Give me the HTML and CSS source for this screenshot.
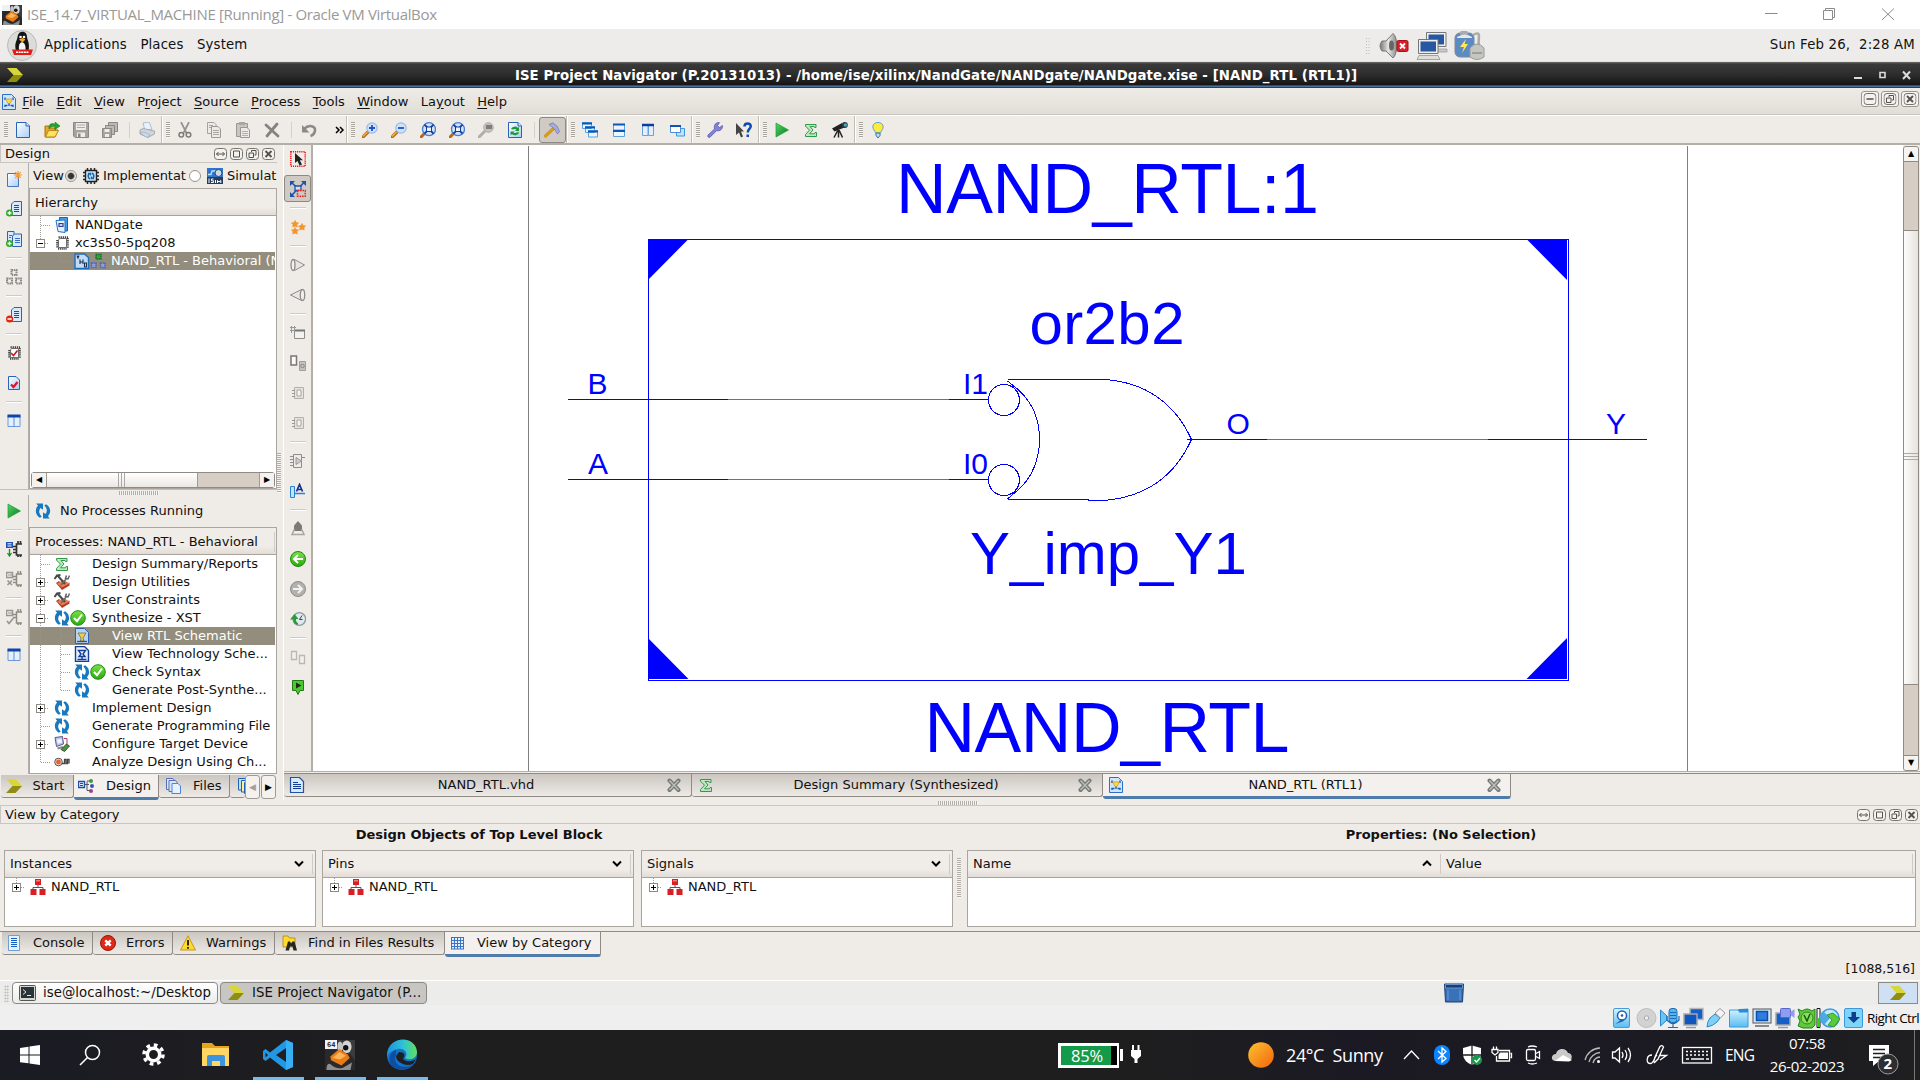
FILE: index.html
```html
<!DOCTYPE html>
<html lang="en">
<head>
<meta charset="utf-8">
<title>ISE_14.7_VIRTUAL_MACHINE [Running] - Oracle VM VirtualBox</title>
<link rel="stylesheet" href="styles.css">
</head>
<body>
<svg class="defs" width="0" height="0" aria-hidden="true">
<defs>
<linearGradient id="gPage" x1="0" y1="0" x2="1" y2="1"><stop offset="0" stop-color="#fff"/><stop offset="1" stop-color="#a9cdf8"/></linearGradient>
<linearGradient id="gGreen" x1="0" y1="0" x2="0" y2="1"><stop offset="0" stop-color="#7be04a"/><stop offset="1" stop-color="#2aa80f"/></linearGradient>
<linearGradient id="gPlay" x1="0" y1="0" x2="1" y2="1"><stop offset="0" stop-color="#55d36a"/><stop offset="1" stop-color="#067a1c"/></linearGradient>
<linearGradient id="gSky" x1="0" y1="0" x2="0" y2="1"><stop offset="0" stop-color="#d6f4ff"/><stop offset="1" stop-color="#58bdf2"/></linearGradient>
<linearGradient id="gSun" x1="0" y1="0" x2="1" y2="1"><stop offset="0" stop-color="#fcc332"/><stop offset="1" stop-color="#f2640c"/></linearGradient>
<linearGradient id="gEdge" x1="0" y1="0" x2="1" y2="0"><stop offset="0" stop-color="#1b8fdc"/><stop offset=".55" stop-color="#2fc3d6"/><stop offset="1" stop-color="#62e05a"/></linearGradient>
<linearGradient id="gMetal" x1="0" y1="0" x2="1" y2="0"><stop offset="0" stop-color="#777"/><stop offset=".5" stop-color="#e6e6e4"/><stop offset="1" stop-color="#8a8a88"/></linearGradient>
</defs>
<symbol id="t-mid" viewBox="0 0 24 18"><path d="M10.5 0V18M11 9.500H20" class="dots"/></symbol>
<symbol id="t-end" viewBox="0 0 24 18"><path d="M10.500 0V9.500H20" class="dots"/></symbol>
<symbol id="t-line" viewBox="0 0 20 18"><path d="M10.500 0V18" class="dots"/></symbol>
<symbol id="t-plus" viewBox="0 0 24 18"><path d="M10.500 0V18M15 9.500H19" class="dots"/><rect x="6.500" y="5.500" width="8" height="8" fill="#fff" stroke="#8e8a84"/><path d="M8 9.500H13M10.500 7V12" stroke="#000"/></symbol>
<symbol id="t-plus1" viewBox="0 0 24 18"><path d="M10.500 0V5M15 9.500H19" class="dots"/><rect x="6.500" y="5.500" width="8" height="8" fill="#fff" stroke="#8e8a84"/><path d="M8 9.500H13M10.500 7V12" stroke="#000"/></symbol>
<symbol id="t-minus" viewBox="0 0 24 18"><path d="M10.500 0V18M15 9.500H19" class="dots"/><rect x="6.500" y="5.500" width="8" height="8" fill="#fff" stroke="#8e8a84"/><path d="M8 9.500H13" stroke="#000"/></symbol>
<symbol id="t-minus1" viewBox="0 0 24 18"><path d="M10.500 0V5M15 9.500H19" class="dots"/><rect x="6.500" y="5.500" width="8" height="8" fill="#fff" stroke="#8e8a84"/><path d="M8 9.500H13" stroke="#000"/></symbol>

<symbol id="chev" viewBox="0 0 16 16"><path d="M0 1H9.500L16 8H6.500Z" fill="#d8d638"/><path d="M6.500 8H16L9.500 15H0Z" fill="#8f8d12"/></symbol>
<symbol id="page" viewBox="0 0 16 16"><path d="M1.500 .500H11L14.500 4V15.500H1.500Z" fill="url(#gPage)" stroke="#2a62b8"/><path d="M11 .500V4H14.500" fill="#dbe9ff" stroke="#2a62b8"/></symbol>
<symbol id="open" viewBox="0 0 16 16"><path d="M1 15V4H5L6 6H11V8L14 8 11 15Z" fill="#e0a92a" stroke="#a87413"/><path d="M1.500 15 4.500 8.500H14.500L11 15Z" fill="#ffe25c" stroke="#b98a1c"/><path d="M5 5C5.500 1.500 8 1 11 2.200V0L16 4 11 7.600V5C8.500 4 7 4.500 5 7Z" fill="#25a32a" stroke="#117514" stroke-width=".5"/></symbol>
<symbol id="save" viewBox="0 0 16 16"><path d="M.500.500H15.500V15.500H2L.500 14Z" fill="#a5a3a0" stroke="#8a8885"/><path d="M3 1H13V8H3Z" fill="#efece8"/><path d="M4 3H12M4 5.500H12" stroke="#aaa"/><path d="M4 10.500H12V15H4Z" fill="#efece8"/><path d="M5 11.500H7.500V15H5Z" fill="#8a8885"/></symbol>
<symbol id="saveall" viewBox="0 0 16 16"><path d="M6.500.500H15.500V9.500H6.500Z" fill="#bcb9b5" stroke="#8a8885"/><path d="M3.500 3.500H12.500V12.500H3.500Z" fill="#bcb9b5" stroke="#8a8885"/><path d="M.500 6.500H9.500V15.500H.500Z" fill="#a5a3a0" stroke="#8a8885"/><path d="M2.500 7H7.500V10H2.500ZM3 12H7V15H3Z" fill="#efece8"/></symbol>
<symbol id="print" viewBox="0 0 16 16"><path d="M4 1 10 0 13 7 6 9Z" fill="#e8f1fc" stroke="#9db4cc" stroke-width=".8"/><path d="M1 8 4 6.500 15.500 9V12L9 15.500 1 12Z" fill="#d2d4d8" stroke="#9a9ca0" stroke-width=".8"/><path d="M1 11 5 10 11 13 8 15.500Z" fill="#c6dcf5" stroke="#8ba3bd" stroke-width=".6"/></symbol>
<symbol id="cut" viewBox="0 0 16 16"><path d="M4 0 9.500 11M12 0 6.500 11" stroke="#94928f" stroke-width="1.700"/><circle cx="4.300" cy="12.700" r="2.300" fill="none" stroke="#7d7b78" stroke-width="1.500"/><circle cx="11.500" cy="12.700" r="2.300" fill="none" stroke="#7d7b78" stroke-width="1.500"/></symbol>
<symbol id="copy" viewBox="0 0 16 16"><path d="M1.500.500H8L10 2.500V11.500H1.500Z" fill="#eceae7" stroke="#a5a29e"/><path d="M5.500 4.500H12L14.500 7V15.500H5.500Z" fill="#eceae7" stroke="#9a9794"/><path d="M7 8.500H13M7 10.500H13M7 12.500H13M3 3.500H7M3 5.500H5" stroke="#aaa7a3"/></symbol>
<symbol id="paste" viewBox="0 0 16 16"><path d="M1.500 1.500H12.500V14.500H1.500Z" fill="#c9c6c2" stroke="#9a9794"/><path d="M4 0H10V3H4Z" fill="#aaa7a3"/><path d="M5.500 5.500H12L14.500 8V15.500H5.500Z" fill="#eceae7" stroke="#9a9794"/><path d="M7 9.500H13M7 11.500H13M7 13.500H13" stroke="#b3b0ac"/></symbol>
<symbol id="del" viewBox="0 0 16 16"><path d="M2 3 14 14M13 2 3 14" stroke="#85837f" stroke-width="2.800" stroke-linecap="round"/></symbol>
<symbol id="undo" viewBox="0 0 16 16"><path d="M3 7C8 2 14.500 4 14 8.500 13.700 11 12 13 9.500 14" fill="none" stroke="#8c8a87" stroke-width="2.600"/><path d="M1 3V10.500H8.500Z" fill="#8c8a87"/></symbol>
<symbol id="lens" viewBox="0 0 16 16"><path d="M1 15 6.500 9.500" stroke="#b56a12" stroke-width="3.200" stroke-linecap="round"/><path d="M1 14.500 5.500 10" stroke="#f2b04c" stroke-width="1.200"/><circle cx="10" cy="6" r="5.200" fill="#cfe2fb" stroke="#9bb9e8" stroke-width="1.200"/></symbol>
<symbol id="zin" viewBox="0 0 16 16"><use href="#lens"/><path d="M10 3V9M7 6H13" stroke="#1b53c0" stroke-width="1.800"/></symbol>
<symbol id="zout" viewBox="0 0 16 16"><use href="#lens"/><path d="M7 6H13" stroke="#1b53c0" stroke-width="1.800"/></symbol>
<symbol id="zfit" viewBox="0 0 16 16"><path d="M1 15 5 11" stroke="#b56a12" stroke-width="3" stroke-linecap="round"/><circle cx="9" cy="7.200" r="6.500" fill="#cfe2fb" stroke="#4a7dd0" stroke-width="1.300"/><path d="M4.500 2.700 13.500 11.700M13.500 2.700 4.500 11.700" stroke="#123f9c" stroke-width="1.900"/><rect x="6.500" y="5" width="5" height="4.500" fill="#e8f2ff" stroke="#123f9c"/></symbol>
<symbol id="zgray" viewBox="0 0 16 16"><path d="M1 15 6.500 9.500" stroke="#b1aeaa" stroke-width="3" stroke-linecap="round"/><circle cx="10.500" cy="5.500" r="4.800" fill="#c4c1bd" stroke="#b0ada9"/><rect x="8" y="3" width="6" height="4" fill="#807e7b"/></symbol>
<symbol id="refresh" viewBox="0 0 16 16"><use href="#page"/><path d="M4 7A4 3.500 0 0 1 11 6L12 4.500V9H8L9.500 7.500A3 2 0 0 0 6 7.500ZM12 10A4 3.500 0 0 1 5 12L3.500 13.500V9.500H7.500L6.500 11A3 2 0 0 0 9.500 10.500Z" fill="#1d9a31"/></symbol>
<symbol id="hammer" viewBox="0 0 16 16"><path d="M1.500 14 9.500 6.500" stroke="#d69a1e" stroke-width="3.200" stroke-linecap="round"/><path d="M5 2.500 9 .800 13 4 15.500 9.500 13.500 12 10.500 7 7.500 4.500Z" fill="#a7abdf" stroke="#6d70ae" stroke-width=".7"/></symbol>
<symbol id="wcas" viewBox="0 0 16 16"><path d="M.500.500H9.500V6.500H.500ZM3.500 4.500H12.500V10.500H3.500ZM6.500 8.500H15.500V15H6.500Z" fill="#eaf5ff" stroke="#5aa2dc"/><path d="M0 1.500H10M3 5.500H13M6 9.500H16" stroke="#0d56b5" stroke-width="2"/></symbol>
<symbol id="whor" viewBox="0 0 16 16"><path d="M2.500 2.500H13.500V8H2.500ZM2.500 9.500H13.500V14.500H2.500Z" fill="#eaf5ff" stroke="#5aa2dc"/><path d="M2 2.500H14M2 9H14" stroke="#0d56b5" stroke-width="2"/></symbol>
<symbol id="wver" viewBox="0 0 16 16"><path d="M2.500 2.500H8V13.500H2.500ZM8.500 2.500H13.500V13.500H8.500Z" fill="#e3efff" stroke="#6aa0dc"/><path d="M2 3H14" stroke="#0a3f9c" stroke-width="2.500"/></symbol>
<symbol id="wflt" viewBox="0 0 16 16"><path d="M7.500 6.500H15.500V14H7.500Z" fill="#bfe2fa" stroke="#3d9ae0"/><path d="M1.500 3.500H11.500V10.500H1.500Z" fill="#fff" stroke="#4a8ed6"/><path d="M1 4H12" stroke="#0d56b5" stroke-width="2"/></symbol>
<symbol id="wrench" viewBox="0 0 16 16"><path d="M1 13 7.500 7C6.500 3 9 0 12.500.700L10.500 3.500 12.500 5.500 15.500 3.500C16 7 13 9.500 9.500 8.700L3 15.300C1.500 16 .200 14.500 1 13Z" fill="#8183d8" stroke="#5052a2" stroke-width=".7"/></symbol>
<symbol id="whats" viewBox="0 0 16 16"><path d="M0 1V13L3 10.500 5 15.500 7 14.500 5 9.500H8Z" fill="#444"/><path d="M8.500 4.500C8.500.500 15 .500 14.700 4.500 14.500 7 11.800 7 11.800 10.500" fill="none" stroke="#0b4cae" stroke-width="2.500"/><path d="M10.500 12.500H13V15H10.500Z" fill="#0b4cae"/></symbol>
<symbol id="play" viewBox="0 0 16 16"><path d="M2 1V15L14.500 8Z" fill="url(#gPlay)" stroke="#1fa233" stroke-width=".7"/></symbol>
<symbol id="sigma" viewBox="0 0 16 16"><path d="M2.500 2.500H13V5.500H11.500L11 4.500H7L10 8 6.500 11.800H11.500L12 10.500H13.500V14.500H2.500V12.500L6.500 8.200 2.500 4.200Z" fill="#bfe8c2" stroke="#2f9a47"/></symbol>
<symbol id="scope" viewBox="0 0 16 16"><path d="M0 6.500 10 1 12.500 5.500 2.500 9.500Z" fill="#222"/><circle cx="12.800" cy="3" r="3" fill="#333"/><circle cx="13.400" cy="3" r="1.800" fill="#38a8cf"/><path d="M6 8 2 15.500M6.500 8V15.500M7 8 10.500 15.500" stroke="#222" stroke-width="1.500"/></symbol>
<symbol id="bulb" viewBox="0 0 16 16"><path d="M5.500 11C5 8.500 2.800 7.500 2.800 4.800 2.800-1 13.200-1 13.200 4.800 13.200 7.500 11 8.500 10.500 11Z" fill="#ffe93c" stroke="#58a9d8"/><path d="M6 11H10V13.500L8 16 6 13.500Z" fill="#bcd9ee" stroke="#1e6ca4" stroke-width=".9"/></symbol>

<symbol id="newsrc" viewBox="0 0 16 16"><path d="M1.500 2.500H12.500V15.500H1.500Z" fill="url(#gPage)" stroke="#4a74b8"/><path d="M12 0V8M8 4H16M9.200 1.200 14.800 6.800M14.800 1.200 9.200 6.800" stroke="#f29a2b" stroke-width="1.200"/></symbol>
<symbol id="doc" viewBox="0 0 16 16"><path d="M8 .500H15.500V14.500H5.500V3Z" fill="#d8e8fd" stroke="#2a62b8"/><path d="M8 4.500H13M8 6.500H13M8 8.500H13M8 10.500H13" stroke="#1d4fa8"/></symbol>
<symbol id="adddoc" viewBox="0 0 16 16"><use href="#doc"/><circle cx="3.500" cy="12" r="3.500" fill="#2fa52a"/><path d="M3.500 10V14M1.500 12H5.500" stroke="#fff" stroke-width="1.300"/></symbol>
<symbol id="addcopy" viewBox="0 0 16 16"><path d="M1.500.500H8V14H1.500Z" fill="#d8e8fd" stroke="#2a62b8"/><path d="M8.500 3H15.500V15.500H6.500V5Z" fill="#d8e8fd" stroke="#2a62b8"/><path d="M9 7.500H14M9 9.500H14M9 11.500H14M3 4.500H6M3 6.500H5" stroke="#3b6cc0"/><circle cx="3.500" cy="12.500" r="3.500" fill="#2fa52a"/><path d="M3.500 10.500V14.500M1.500 12.500H5.500" stroke="#fff" stroke-width="1.300"/></symbol>
<symbol id="rmdoc" viewBox="0 0 16 16"><use href="#doc"/><circle cx="3.600" cy="12" r="3.600" fill="#dc2a12"/><path d="M1.500 12H5.700" stroke="#fff" stroke-width="1.500"/></symbol>
<symbol id="tri" viewBox="0 0 16 16"><path d="M5.500 1H10.500V6H5.500ZM1 9.500H6V14.500H1ZM10 9.500H15V14.500H10Z" fill="none" stroke="#8b8986" stroke-width="2" stroke-dasharray="1.500 .700"/></symbol>
<symbol id="chip" viewBox="0 0 16 16"><path d="M5.500 3.500H12.500V12.500H4.500V5Z" fill="#fff" stroke="#777"/><path d="M4.500 2.200H14M4 13.800H13M3.200 5V13.500M13.800 3V13.500" stroke="#444" stroke-width="2" stroke-dasharray="1.300 .800"/></symbol>
<symbol id="chipchk" viewBox="0 0 16 16"><use href="#chip"/><path d="M5 8 7.500 10.500 11.500 5.500" fill="none" stroke="#d01522" stroke-width="1.600"/></symbol>
<symbol id="pgchk" viewBox="0 0 16 16"><path d="M2.500 1.500H10L13.500 5V14.500H2.500Z" fill="url(#gPage)" stroke="#2a62b8"/><path d="M5 9.500 7.500 12 11.500 7" fill="none" stroke="#dd1727" stroke-width="2.300"/></symbol>
<symbol id="cols" viewBox="0 0 16 16"><path d="M2 2.500H14V13.500H2Z" fill="#e4f0ff" stroke="#6d9ad6"/><path d="M8 4V14" stroke="#5d8fd4"/><path d="M1.500 3H14.500" stroke="#0f44a8" stroke-width="3"/></symbol>

<symbol id="pchip" viewBox="0 0 16 16"><path d="M0 1H7V7H0Z" fill="#1f52b4"/><path d="M1.500 2.800H5.500M1.500 5H5.500" stroke="#fff"/><path d="M3.500 8V14M1.500 12 3.500 15 5.500 12" stroke="#16902a" fill="none" stroke-width="1.300"/><path d="M16 3H10.500V14H16M7 5.500H10M7 8.500H10M7 11.500H10M12 0V3M14.500 0V3M12 14V16M14.500 14V16" stroke="#333" stroke-width="1.700" fill="none"/></symbol>
<symbol id="pgray" viewBox="0 0 16 16"><path d="M.500 1.500H6.500V6.500H.500Z" fill="none" stroke="#999692" stroke-width="1.500"/><path d="M2 4H6" stroke="#999692"/><path d="M1.500 9.500 6 14M6 9.500 1.500 14" stroke="#999692" stroke-width="1.700"/><path d="M16 3H10.500V14H16M7 5.500H10M7 8.500H10M7 11.500H10M12 0V3M14.500 0V3M12 14V16M14.500 14V16" stroke="#8f8c88" stroke-width="1.500" fill="none"/></symbol>
<symbol id="pgray2" viewBox="0 0 16 16"><path d="M.500 1.500H6.500V6.500H.500Z" fill="none" stroke="#999692" stroke-width="1.500"/><path d="M2 4H6" stroke="#999692"/><path d="M1 12 3 14.500 7.500 9" fill="none" stroke="#999692" stroke-width="1.700"/><path d="M16 3H10.500V14H16M7 5.500H10M7 8.500H10M12 0V3M14.500 0V3M12 14V16M14.500 14V16" stroke="#8f8c88" stroke-width="1.500" fill="none"/></symbol>

<symbol id="select" viewBox="0 0 16 16"><path d="M.800.800H15.200V15.200H.800Z" fill="none" stroke="#ee1c1c" stroke-width="1.500" stroke-dasharray="1.200 .900"/><path d="M5 2V12L7.500 10 9.500 14.500 12 13.500 9.800 9.300H13Z" fill="#222"/></symbol>
<symbol id="fitsel" viewBox="0 0 16 16"><path d="M1.500 1.500 8 7.500M14 1.500 2 14" stroke="#1c53ad" stroke-width="1.600"/><path d="M0 0H5L0 5ZM16 0V5L11 0ZM0 16V11L5 16Z" fill="#1c53ad"/><path d="M5 5H11V9.500H5Z" fill="#d6dff0" stroke="#1c53ad" stroke-width="1.300"/><path d="M7.500 9.500H15.200V15.200H7.500Z" fill="#cfcac4" stroke="#ee1c1c" stroke-width="1.500" stroke-dasharray="1.500 1"/></symbol>
<symbol id="stars" viewBox="0 0 16 16"><path d="M5 1.500 6 3.700 8.500 4 6.800 5.500 7.200 8 5 6.900 2.800 8 3.200 5.500 1.500 4 4 3.700ZM5 8.500 6 10.700 8.500 11 6.800 12.500 7.200 15 5 13.900 2.800 15 3.200 12.500 1.500 11 4 10.700ZM12 4.500 13 6.700 15.500 7 13.800 8.700 14.200 11 12 9.900 9.800 11 10.200 8.700 8.500 7 11 6.700Z" fill="#f5932a" stroke="#f5932a" stroke-width=".8"/></symbol>
<symbol id="coneR" viewBox="0 0 16 16"><path d="M4.500 2.500 14.500 8 4.500 13.500Z" fill="#e8e6e3" stroke="#8f8d8a"/><ellipse cx="3" cy="8" rx="2" ry="5.500" fill="#f2f0ed" stroke="#8f8d8a" stroke-width="1.300"/></symbol>
<symbol id="coneL" viewBox="0 0 16 16"><path d="M11.500 2.500 .500 8 11.500 13.500Z" fill="#e8e6e3" stroke="#8f8d8a"/><ellipse cx="12.500" cy="8" rx="2.200" ry="5.500" fill="#f2f0ed" stroke="#8f8d8a" stroke-width="1.300"/></symbol>
<symbol id="nwin" viewBox="0 0 16 16"><path d="M4.500 5.500H14.500V13.500H4.500Z" fill="#f2f2f0" stroke="#8e8c89"/><path d="M5 5.500H15" stroke="#777" stroke-width="2"/><path d="M0 2.500H6M0 5.500H5M1.500 1V8M4.500 1V7" stroke="#9a9895"/></symbol>
<symbol id="boxes" viewBox="0 0 16 16"><path d="M1 1H6.500V10H1Z" fill="#fafafa" stroke="#777" stroke-width="1.500"/><path d="M9.500 6.500H15.500V15.500H9.500Z" fill="#c6c4c1" stroke="#a09e9b"/><circle cx="12.500" cy="11" r="1.800" fill="none" stroke="#888"/></symbol>
<symbol id="gchip" viewBox="0 0 16 16"><path d="M4.500 2.500H13.500V13.500H4.500Z" fill="#e6e3df" stroke="#b3b0ac"/><path d="M7 5H11V11H7Z" fill="#f5f3f0" stroke="#aaa7a3"/><path d="M2 5.500H5M2 8.500H5M2 11.500H5" stroke="#9a9894"/></symbol>
<symbol id="amp" viewBox="0 0 16 16"><path d="M3.500 1.500H11.500V14.500H3.500Z" fill="#eeecea" stroke="#8f8d8a"/><path d="M6 4.500 11.500 8 6 11.500Z" fill="#cfcdca" stroke="#9a9895"/><path d="M0 3.500H3M0 6.500H3M0 9.500H3M0 12.500H3M12 4.500H15" stroke="#8f8d8a"/></symbol>
<symbol id="label" viewBox="0 0 16 16"><path d="M.500 3.500H4.500V14.500H.500Z" fill="#bfe4fb" stroke="#2a83d0"/><path d="M4 10.500H15" stroke="#2a83d0" stroke-width="1.500"/><path d="M6.500 8.500 9.500 1.500 12.500 8.500M7.500 6.500H11.500" fill="none" stroke="#1b2f8c" stroke-width="1.700"/></symbol>
<symbol id="push" viewBox="0 0 16 16"><path d="M8 0 12 4.500V10H4V4.500Z" fill="#7c7a77"/><path d="M4.500 8 2 13.500H14L11.500 8" fill="none" stroke="#a8a6a3" stroke-width="1.500"/></symbol>
<symbol id="back" viewBox="0 0 16 16"><circle cx="8" cy="8" r="7.500" fill="url(#gGreen)" stroke="#1c8a0c"/><path d="M8 4 4 8 8 12M4 8H13" fill="none" stroke="#fff" stroke-width="2"/></symbol>
<symbol id="fwd" viewBox="0 0 16 16"><circle cx="8" cy="8" r="7.500" fill="#b3b1ae" stroke="#8e8c89"/><path d="M8 4 12 8 8 12M12 8H3" fill="none" stroke="#f2f2f2" stroke-width="2"/></symbol>
<symbol id="hist" viewBox="0 0 16 16"><circle cx="9.300" cy="8" r="6.300" fill="#dfe9ee" stroke="#8f989e" stroke-width="1.300"/><path d="M9.500 8.500 12 4.500M9.500 8.500H12.500" stroke="#345"/><path d="M8 14C4 13 3 11 3.500 8.500H0L4.500 3 8.500 8H6C5.800 10 6.500 11.500 8 12Z" fill="#2c9a3c"/></symbol>
<symbol id="pair" viewBox="0 0 16 16"><path d="M1.500 2.500H6.500V10.500H1.500ZM9.500 6.500H14.500V14.500H9.500Z" fill="#f1efed" stroke="#bbb8b4" stroke-width="1.300"/></symbol>
<symbol id="tag" viewBox="0 0 16 16"><path d="M2.500 1.500H13.500V11.500H10L8 15.500 6 11.500H2.500Z" fill="#4cc832" stroke="#24781a"/><path d="M6 3.500V9.500L11.500 6.500Z" fill="#1b2a16"/></symbol>

<symbol id="cyc" viewBox="1.500 1 13 14" preserveAspectRatio="none"><path d="M5.500 14C1.500 11.500 1.300 6 4 3.500L2.500 1.500H8V7L6 5.300C4.300 7.500 4.500 10.500 7 12.800ZM10.500 2C14.500 4.500 14.700 10 12 12.500L13.500 14.500H8V9L10 10.700C11.700 8.500 11.500 5.500 9 3.200Z" fill="#1878c0"/></symbol>
<symbol id="okc" viewBox="0 0 16 16"><circle cx="8" cy="8" r="7.300" fill="url(#gGreen)" stroke="#1f8d10"/><path d="M4 8 7 11.200 12 4.500" fill="none" stroke="#fff" stroke-width="2"/></symbol>
<symbol id="tools" viewBox="0 0 16 16"><path d="M2 9 8 16 15.500 11.500V8.500L9 11 5 7Z" fill="#b53c1b"/><path d="M3 9.500 8 13.500 15.500 9.500 10 6Z" fill="#ea7a50"/><path d="M.500 5 3 1.500 6.500 1M4 2 11 10" stroke="#4a4a4a" stroke-width="2" fill="none"/><path d="M15.500 1.500 14 5 11.500 4.500 12.500 1.500M12.500 4.500 7 11" stroke="#666" stroke-width="1.500" fill="none"/></symbol>
<symbol id="rtl" viewBox="0 0 16 16"><path d="M1.500.500H10.500L14.500 4.500V15.500H1.500Z" fill="#b8d3f2" stroke="#2e5fa8"/><path d="M4 5H12L9 10 10 13H6.500L7 10Z" fill="#e8cf58" stroke="#7a6f30" stroke-width=".8"/><path d="M3 13.500H13" stroke="#24549c" stroke-width="1.300"/></symbol>
<symbol id="tech" viewBox="0 0 16 16"><path d="M1.500.500H10.500L14.500 4.500V15.500H1.500Z" fill="#e6effc" stroke="#173f98" stroke-width="1.400"/><path d="M4.500 4.500H11.500L9 8 11 10.500H5L7 8ZM8 10V13M3.500 13.500H12.500" fill="none" stroke="#173f98" stroke-width="1.400"/></symbol>
<symbol id="proj" viewBox="0 0 16 16"><path d="M5.500.500H13.500V14H5.500Z" fill="#4b9ce4" stroke="#1c5fae"/><path d="M2 3.500 11 3V15.500L4 14.500Z" fill="#e2f0fe" stroke="#1c73c8"/><path d="M5 6.500H9V9.500H5Z" fill="#c9d4f4" stroke="#2b3f96" stroke-width="1.200"/></symbol>
<symbol id="vhd" viewBox="0 0 16 16"><path d="M1 1H10.500L14.500 4.500V15.500H1Z" fill="#c3dcf5" stroke="#1f6dbd" stroke-width="1.400"/><path d="M3 2.500 4 5 5 2.500M6 6.500V11M9 6.500V11M6 9H9M10.500 10V14H12.500V10Z" fill="none" stroke="#1c2d50" stroke-width="1.100"/></symbol>
<symbol id="mods" viewBox="0 0 16 16"><path d="M6 1.500H11V6H6Z" fill="#2fa53a" stroke="#19702a" stroke-width="1.500" stroke-dasharray="1.500 .600"/><path d="M1.500 10H6V14.500H1.500ZM10.500 10H15V14.500H10.500Z" fill="#8fa0e0" stroke="#5364b4" stroke-width="1.600" stroke-dasharray="1.500 .600"/></symbol>
<symbol id="conf" viewBox="0 0 16 16"><path d="M1 1.500 8.500.500 9.500 8 2.500 10.500Z" fill="#b9c4ea" stroke="#555b88"/><path d="M3 3.500 7.500 3 8 6.500 3.800 7.800Z" fill="#f4f6ff"/><path d="M3.500 12.500 9 11" stroke="#888" stroke-width="2.200"/><path d="M10 2.500H13V8" fill="none" stroke="#b0386a"/><path d="M7 13.500 12.500 8 15.500 10 10.500 15.500Z" fill="#4a9440" stroke="#223c20" stroke-width=".8"/></symbol>
<symbol id="anlz" viewBox="0 0 16 16"><circle cx="4.500" cy="8" r="3.800" fill="#f4dccb" stroke="#555"/><circle cx="4.500" cy="8" r="2.400" fill="#e2633a"/><path d="M8 9.500H10.500V5.500H12V9.500H13.500V5.500H15V9.500" fill="none" stroke="#444" stroke-width="1.300"/></symbol>
<symbol id="cycchip" viewBox="0 0 16 16"><path d="M2.500 2.500H13.500V13.500H2.500Z" fill="#cfe4f6" stroke="#222" stroke-width="1.400"/><path d="M4.500 0V2M8 0V2M11.500 0V2M4.500 14V16M8 14V16M11.500 14V16M0 4.500H2M0 8H2M0 11.500H2M14 4.500H16M14 8H16M14 11.500H16" stroke="#222" stroke-width="1.500"/><path d="M7 11C4.500 9.500 5 7 6 5.500M9 5C11.500 6.500 11 9 10 10.500M5 5.500H7.500V7.500M11 10.500H8.500V8.500" fill="none" stroke="#1267ad" stroke-width="1.500"/></symbol>
<symbol id="isim" viewBox="0 0 16 16"><path d="M0 0H16V9H0Z" fill="#2f75cb"/><path d="M1 6.500H4L5 3H9" stroke="#bfe0ff" fill="none" stroke-width="1.300"/><circle cx="11.500" cy="5" r="3.500" fill="#ccd8e6" stroke="#384860"/><path d="M0 9H16V16H0Z" fill="#273d60"/><path d="M2 10.500V15M4 14.500H6.500V12.800H4.500V11H6.500M8.500 12V15M10.500 15V12.500L12 14 13.800 12.500V15" stroke="#fff" fill="none"/></symbol>
<symbol id="dsn" viewBox="0 0 16 16"><path d="M.500 3.500H6.500V9.500H.500Z" fill="#dfeafd" stroke="#1c4faa" stroke-width="1.300"/><path d="M2 5.500H5M2 7.500H5" stroke="#1c4faa"/><path d="M7 6.500H11M9 3.500V12.500M9 3H12M9 12.500H12" stroke="#555" fill="none"/><circle cx="13" cy="3" r="2" fill="#3d9a3d"/><circle cx="14" cy="8" r="2" fill="#3b50b8"/><circle cx="13" cy="13" r="2" fill="#9c3b9a"/></symbol>
<symbol id="files" viewBox="0 0 16 16"><path d="M.500.500H7L9 3V11.500H.500Z" fill="#dbe4f8" stroke="#5571b8"/><path d="M3 2.500H9.500L11.500 5V13.500H3Z" fill="#dbe4f8" stroke="#5571b8"/><path d="M6 5.500H12L14.500 8V15.500H6Z" fill="#e6f0ff" stroke="#4a86d8"/></symbol>
<symbol id="libs" viewBox="0 0 16 16"><path d="M1.500.500H9V12H1.500Z" fill="#bfe0fb" stroke="#1b62b8"/><path d="M4.500 2.500H12V14H4.500Z" fill="#fff38a" stroke="#1b62b8"/><path d="M7.500 4.500H15V15.500H7.500Z" fill="#ffef5a" stroke="#1b62b8"/></symbol>
<symbol id="txt" viewBox="0 0 16 16"><path d="M1.500.500H10.500L14.500 4.500V15.500H1.500Z" fill="#d9e8fd" stroke="#24529f" stroke-width="1.200"/><path d="M4 5.500H9M4 7.500H12M4 9.500H12M4 11.500H12" stroke="#123f93" stroke-width="1.200"/></symbol>
<symbol id="sch" viewBox="0 0 16 16"><path d="M1.500.500H10.500L14.500 4.500V15.500H1.500Z" fill="#cfe4fd" stroke="#2b6fc8"/><path d="M4 3.500V6M12 3.500V6M4 13V11.500H6.500M12 13V11.500H9.500M8 9V12" fill="none" stroke="#1c5cc0" stroke-width="1.400"/><path d="M4.500 5H11.500L9 9.500H7Z" fill="#ffd93c" stroke="#b08a14" stroke-width=".6"/></symbol>
<symbol id="closex" viewBox="0 0 14 14"><path d="M2.500 2.500 11.500 12M11.500 2.500 2.500 12" stroke="#777b78" stroke-width="4" stroke-linecap="round"/><path d="M2.500 2.500 11.500 12M11.500 2.500 2.500 12" stroke="#b9bbb7" stroke-width="1.600"/></symbol>
<symbol id="hier" viewBox="0 0 16 16"><path d="M8 6V9M3 11V8.500H13V11" fill="none" stroke="#555"/><path d="M5 0H11V6H5ZM.500 10H6.500V16H.500ZM9.500 10H15.500V16H9.500Z" fill="#d81f26"/><path d="M6 1H10V2.500H6Z" fill="#f17a7a"/></symbol>
<symbol id="cons" viewBox="0 0 16 16"><path d="M2.500.500H13.500V15.500H2.500Z" fill="#e8f2fe" stroke="#6b9fdc"/><path d="M5 3.500H11M5 5.500H11M5 7.500H11M5 9.500H11M5 11.500H11" stroke="#1560c0" stroke-width="1.200"/></symbol>
<symbol id="err" viewBox="0 0 16 16"><circle cx="8" cy="8" r="7.500" fill="#dc2a17" stroke="#9a1408"/><path d="M5.300 5.300 10.700 10.700M10.700 5.300 5.300 10.700" stroke="#fff" stroke-width="2.400"/></symbol>
<symbol id="warn" viewBox="0 0 16 16"><path d="M8 .800 15.500 15H.500Z" fill="#ffd92e" stroke="#c59b12"/><path d="M8 5V10.500M8 12V13.800" stroke="#222" stroke-width="1.900"/></symbol>
<symbol id="find" viewBox="0 0 16 16"><path d="M1 1H6L7.500 3H13V12H1Z" fill="#ffd92e" stroke="#a98416" stroke-width=".8"/><path d="M3.500 15.500 6 6.500H8L9 8.500 10.500 6.500H12.500L15 15.500H11.500L10.500 11.500H8L7 15.500Z" fill="#252525"/></symbol>
<symbol id="grid" viewBox="0 0 16 16"><path d="M2 2H14V14H2Z" fill="#e4efff"/><path d="M1.500 2V14M4.500 2V14M7.500 2V14M10.500 2V14M13.500 2V14M1 2.500H14M1 5.500H14M1 8.500H14M1 11.500H14M1 14H14" stroke="#3b74c4"/></symbol>
<symbol id="ddot" viewBox="0 0 13 12"><rect x=".500" y=".500" width="12" height="11" rx="3" fill="#f4f2ef" stroke="#77736d"/></symbol>
<symbol id="d-arr" viewBox="0 0 13 12"><use href="#ddot"/><path d="M2.500 6H10.500M4.500 4 2.500 6 4.500 8M8.500 4 10.500 6 8.500 8" fill="none" stroke="#55514c"/></symbol>
<symbol id="d-max" viewBox="0 0 13 12"><use href="#ddot"/><path d="M3.500 3H9.500V9H3.500Z" fill="none" stroke="#55514c"/></symbol>
<symbol id="d-flt" viewBox="0 0 13 12"><use href="#ddot"/><path d="M5.500 4V2.500H10V7H8.500M3 5H7.500V9.500H3Z" fill="none" stroke="#55514c"/></symbol>
<symbol id="d-cls" viewBox="0 0 13 12"><use href="#ddot"/><path d="M3.500 3 9.500 9M9.500 3 3.500 9" stroke="#55514c" stroke-width="1.900"/></symbol>
<symbol id="d-min" viewBox="0 0 13 12"><use href="#ddot"/><path d="M3 6H10" stroke="#55514c" stroke-width="1.600"/></symbol>
<symbol id="tux" viewBox="0 0 20 20"><rect width="20" height="20" fill="#29292b"/><path d="M8 0H20V14Q18 10 16 9L9 6Z" fill="#3b3b3d"/><ellipse cx="14.500" cy="4.500" rx="3.200" ry="4.200" fill="#d4d4d4"/><ellipse cx="10" cy="4.500" rx="1.800" ry="3.500" fill="#c4c4c4"/><circle cx="13.800" cy="5.200" r="1.800" fill="#111"/><path d="M3.500 11 9.500 6 15 9.500 16.500 12 11 17 4 13.500Z" fill="#e87c17"/><path d="M5 12 9.500 8 14 10.500 10 13Z" fill="#ffb458"/><path d="M1 20Q1 15 3.500 16 8 20 12 18.500L18 15 17 20Z" fill="#8e8e8e"/><rect width="8" height="6" fill="#f1f1f1"/></symbol>
</svg>

<div class="host-title">
  <svg class="ht-icon" width="20" height="20"><use href="#tux"/></svg>
  <span class="ht-text">ISE_14.7_VIRTUAL_MACHINE [Running] - Oracle VM VirtualBox</span>
  <svg class="ht-btns" width="136" height="29" fill="none" stroke="#8b8b8b"><path d="M5 13.500H17.500M63.500 10.500H72.500V19.500H63.500ZM65.500 10V8.500H74.500V17.500H73M122 8.500 134 20M134 8.500 122 20"/></svg>
</div>

<div class="gnome-top">
  <svg class="oracle" width="30" height="31" viewBox="0 0 30 31"><ellipse cx="15" cy="15.500" rx="14.500" ry="15" fill="#dcdcdb" stroke="#b9b9b9"/><path d="M9 21C7 13 10 11 10.500 7 11 0 20 0 20 7 20.500 11 23 13 21.500 21Z" fill="#141414"/><path d="M12 20Q11 13 15 12 19 13 18.500 20Z" fill="#f2f2f2"/><path d="M12 9.500 15.500 8 18.500 9.500 15.500 12.500Z" fill="#f2a81d"/><circle cx="13.500" cy="7" r="1.300" fill="#fff"/><circle cx="17" cy="7" r="1.300" fill="#fff"/><path d="M5 19.500H26L24 25H7Z" fill="#dc2017"/><path d="M9 22.200H22" stroke="#fff" stroke-width="1.500" stroke-dasharray="2 .600"/></svg>
  <span class="gm">Applications</span><span class="gm">Places</span><span class="gm">System</span>
  <svg class="gtray" width="126" height="33" viewBox="0 0 126 33">
    <path d="M1.500 9V25M4 9V25" stroke="#bbb" stroke-dasharray="1 2"/>
    <path d="M17 12H21L28 4.500C33 8 33 25 28 29L21 22H17Q13 17 17 12Z" fill="url(#gMetal)" stroke="#777"/><ellipse cx="26.500" cy="16.500" rx="2.500" ry="5" fill="#666"/><rect x="32" y="11.500" width="11" height="11" rx="1.500" fill="#d9202a" stroke="#a31017"/><path d="M35 14.500 40 19.500M40 14.500 35 19.500" stroke="#fff" stroke-width="1.800"/>
    <path d="M61.500 3.500H81V17.500H61.500Z" fill="#f0f0ee" stroke="#777"/><path d="M63.500 5.500H79V15.500H63.500Z" fill="#2757a0"/><path d="M68 20H82V23H68Z" fill="#ccc" stroke="#888" stroke-width=".6"/>
    <path d="M53.500 10.500H73V24.500H53.500Z" fill="#f0f0ee" stroke="#777"/><path d="M55.500 12.500H71V22.500H55.500Z" fill="#2757a0"/><path d="M54 26.500H73L75 30.500H52Z" fill="#deded8" stroke="#888" stroke-width=".7"/>
    <rect x="90" y="4" width="19" height="24" rx="5" fill="#5c8ac2" stroke="#7d8a96"/><rect x="95" y="2" width="8" height="4" rx="1.500" fill="#aaa"/><path d="M92 9H107V8Q100 3 92 8Z" fill="#e4e8ec"/><path d="M101 10 95 18H99L97 24 103 15H99.500Z" fill="#ffe95a"/><path d="M108 6C118 0 112 12 114 16" fill="none" stroke="#aaa" stroke-width="2.500"/><path d="M105 28V19Q112 11 119 19V28Q112 33 105 28Z" fill="#c6c6c0" stroke="#999"/><path d="M107 24H117" stroke="#777"/>
  </svg>
  <span class="gclock">Sun Feb 26,&nbsp; 2:28 AM</span>
</div>

<div class="win-title">
  <svg class="wt-icon" width="16" height="16"><use href="#chev"/></svg>
  <span class="wt-text">ISE Project Navigator (P.20131013) - /home/ise/xilinx/NandGate/NANDgate/NANDgate.xise - [NAND_RTL (RTL1)]</span>
  <svg class="wt-btns" width="60" height="16" fill="none" stroke="#dcdcd8"><path d="M1 11H9" stroke-width="2"/><path d="M27 5.500H32V10.500H27Z" stroke-width="1.600"/><path d="M50 4.500 57 12M57 4.500 50 12" stroke-width="2"/></svg>
</div>

<div class="menubar">
  <svg class="mb-icon" width="16" height="18"><use href="#sch"/></svg>
  <span><u>F</u>ile</span><span><u>E</u>dit</span><span><u>V</u>iew</span><span>P<u>r</u>oject</span><span><u>S</u>ource</span><span><u>P</u>rocess</span><span><u>T</u>ools</span><span><u>W</u>indow</span><span>La<u>y</u>out</span><span><u>H</u>elp</span>
  <div class="mdi"><svg width="18" height="16"><use href="#d-min"/></svg><svg width="18" height="16"><use href="#d-flt"/></svg><svg width="18" height="16"><use href="#d-cls"/></svg></div>
</div>

<div class="toolbar">
  <div class="tg"><i class="grip"></i><b><svg><use href="#page"/></svg></b><b><svg><use href="#open"/></svg></b><b><svg><use href="#save"/></svg></b><b><svg><use href="#saveall"/></svg></b><i class="vs"></i><b><svg><use href="#print"/></svg></b></div>
  <div class="tg"><i class="grip"></i><b><svg><use href="#cut"/></svg></b><b><svg><use href="#copy"/></svg></b><b><svg><use href="#paste"/></svg></b><b><svg><use href="#del"/></svg></b><i class="vs"></i><b><svg><use href="#undo"/></svg></b><em><svg width="10" height="8" viewBox="0 0 10 8"><path d="M1 1 4 4 1 7M5 1 8 4 5 7" fill="none" stroke="#000" stroke-width="1.500"/></svg></em></div>
  <div class="tg"><i class="grip"></i><b><svg><use href="#zin"/></svg></b><b><svg><use href="#zout"/></svg></b><b><svg><use href="#zfit"/></svg></b><b><svg><use href="#zfit"/></svg></b><b><svg><use href="#zgray"/></svg></b><b><svg><use href="#refresh"/></svg></b><i class="vs"></i><b class="on"><svg><use href="#hammer"/></svg></b></div>
  <div class="tg"><i class="grip"></i><b><svg><use href="#wcas"/></svg></b><b><svg><use href="#whor"/></svg></b><b><svg><use href="#wver"/></svg></b><b><svg><use href="#wflt"/></svg></b></div>
  <div class="tg"><i class="grip"></i><b><svg><use href="#wrench"/></svg></b><b><svg><use href="#whats"/></svg></b></div>
  <div class="tg"><i class="grip"></i><b><svg><use href="#play"/></svg></b><b><svg><use href="#sigma"/></svg></b><b><svg><use href="#scope"/></svg></b></div>
  <div class="tg last"><i class="grip"></i><b><svg><use href="#bulb"/></svg></b></div>
</div>

<div class="work">
  <div class="dock">
    <div class="dock-title"><span>Design</span><div class="dbtns"><svg><use href="#d-arr"/></svg><svg><use href="#d-max"/></svg><svg><use href="#d-flt"/></svg><svg><use href="#d-cls"/></svg></div></div>
    <div class="upper">
      <div class="vbar"><b><svg><use href="#newsrc"/></svg></b><b><svg><use href="#adddoc"/></svg></b><b><svg><use href="#addcopy"/></svg></b><i></i><b><svg><use href="#tri"/></svg></b><i></i><b><svg><use href="#rmdoc"/></svg></b><i></i><b><svg><use href="#chipchk"/></svg></b><b><svg><use href="#pgchk"/></svg></b><i></i><b><svg><use href="#cols"/></svg></b></div>
      <div class="ucol">
        <div class="viewrow"><span class="vw">View</span><span class="radio on"></span><svg width="16" height="16" class="vi"><use href="#cycchip"/></svg><span class="impl">Implementat</span><span class="radio"></span><svg width="16" height="16" class="vi"><use href="#isim"/></svg><span class="simu">Simulat</span></div>
        <div class="treebox hier">
          <div class="th"><span>Hierarchy</span></div>
          <div class="tr"><svg class="c24"><use href="#t-mid"/></svg><svg class="i16"><use href="#proj"/></svg><span>NANDgate</span></div>
          <div class="tr"><svg class="c24"><use href="#t-minus1"/></svg><svg class="i16"><use href="#chip"/></svg><span>xc3s50-5pq208</span></div>
          <div class="tr sel"><i class="c20"></i><svg class="c24 dim"><use href="#t-end"/></svg><svg class="i16"><use href="#vhd"/></svg><svg class="i16"><use href="#mods"/></svg><span>NAND_RTL - Behavioral (N</span></div>
          <div class="grow"></div>
          <div class="hsb"><span class="hb">&#9664;</span><span class="hthumb"></span><span class="htrack"></span><span class="hb">&#9654;</span></div>
        </div>
      </div>
    </div>
    <div class="hsplit"><i></i></div>
    <div class="lower">
      <div class="vbar"><b><svg><use href="#play"/></svg></b><i></i><b><svg><use href="#pchip"/></svg></b><b><svg><use href="#pgray"/></svg></b><i></i><b><svg><use href="#pgray2"/></svg></b><i></i><b><svg><use href="#cols"/></svg></b></div>
      <div class="ucol">
        <div class="noproc"><svg width="16" height="16"><use href="#cyc"/></svg><span>No Processes Running</span></div>
        <div class="treebox proc">
          <div class="th"><span>Processes: NAND_RTL - Behavioral</span></div>
          <div class="tr"><svg class="c24"><use href="#t-mid"/></svg><svg class="i16"><use href="#sigma"/></svg><i class="i16"></i><span>Design Summary/Reports</span></div>
          <div class="tr"><svg class="c24"><use href="#t-plus"/></svg><svg class="i16"><use href="#tools"/></svg><i class="i16"></i><span>Design Utilities</span></div>
          <div class="tr"><svg class="c24"><use href="#t-plus"/></svg><svg class="i16"><use href="#tools"/></svg><i class="i16"></i><span>User Constraints</span></div>
          <div class="tr"><svg class="c24"><use href="#t-minus"/></svg><svg class="i16"><use href="#cyc"/></svg><svg class="i16"><use href="#okc"/></svg><span>Synthesize - XST</span></div>
          <div class="tr sel"><svg class="c20 dim"><use href="#t-line"/></svg><svg class="c24 dim"><use href="#t-mid"/></svg><svg class="i16"><use href="#rtl"/></svg><i class="i16"></i><span>View RTL Schematic</span></div>
          <div class="tr"><svg class="c20"><use href="#t-line"/></svg><svg class="c24"><use href="#t-mid"/></svg><svg class="i16"><use href="#tech"/></svg><i class="i16"></i><span>View Technology Sche...</span></div>
          <div class="tr"><svg class="c20"><use href="#t-line"/></svg><svg class="c24"><use href="#t-mid"/></svg><svg class="i16"><use href="#cyc"/></svg><svg class="i16"><use href="#okc"/></svg><span>Check Syntax</span></div>
          <div class="tr"><svg class="c20"><use href="#t-line"/></svg><svg class="c24"><use href="#t-end"/></svg><svg class="i16"><use href="#cyc"/></svg><i class="i16"></i><span>Generate Post-Synthe...</span></div>
          <div class="tr"><svg class="c24"><use href="#t-plus"/></svg><svg class="i16"><use href="#cyc"/></svg><i class="i16"></i><span>Implement Design</span></div>
          <div class="tr"><svg class="c24"><use href="#t-mid"/></svg><svg class="i16"><use href="#cyc"/></svg><i class="i16"></i><span>Generate Programming File</span></div>
          <div class="tr"><svg class="c24"><use href="#t-plus"/></svg><svg class="i16"><use href="#conf"/></svg><i class="i16"></i><span>Configure Target Device</span></div>
          <div class="tr"><svg class="c24"><use href="#t-end"/></svg><svg class="i16"><use href="#anlz"/></svg><i class="i16"></i><span>Analyze Design Using Ch...</span></div>
        </div>
      </div>
    </div>
    <div class="tabs dtabs">
      <div class="tab start"><svg><use href="#chev"/></svg><span>Start</span></div>
      <div class="tab design cur"><svg><use href="#dsn"/></svg><span>Design</span></div>
      <div class="tab files"><svg><use href="#files"/></svg><span>Files</span></div>
      <div class="tab part"><svg><use href="#libs"/></svg></div>
      <span class="nav off">&#9664;</span><span class="nav">&#9654;</span>
    </div>
  </div>
  <div class="vsplit"><i></i></div>
  <div class="main">
    <div class="mrow">
      <div class="vbar vt"><b><svg><use href="#select"/></svg></b><b class="on"><svg><use href="#fitsel"/></svg></b><i></i><b><svg><use href="#stars"/></svg></b><i></i><b><svg><use href="#coneR"/></svg></b><b><svg><use href="#coneL"/></svg></b><i></i><b><svg><use href="#nwin"/></svg></b><b><svg><use href="#boxes"/></svg></b><b><svg><use href="#gchip"/></svg></b><b><svg><use href="#gchip"/></svg></b><i></i><b><svg><use href="#amp"/></svg></b><b><svg><use href="#label"/></svg></b><i></i><b><svg><use href="#push"/></svg></b><b><svg><use href="#back"/></svg></b><b><svg><use href="#fwd"/></svg></b><b><svg><use href="#hist"/></svg></b><i></i><b><svg><use href="#pair"/></svg></b><b><svg><use href="#tag"/></svg></b></div>
      <svg class="schematic" width="1590" height="626" viewBox="313 145 1590 626">
        <path d="M528.500 146V771M1687.500 146V771" stroke="#808080"/>
        <g fill="#00f" class="lbl">
          <text x="896" y="212.500" font-size="70" textLength="423">NAND_RTL:1</text>
          <text x="924.500" y="751.500" font-size="70" textLength="365">NAND_RTL</text>
          <text x="1029.500" y="344" font-size="60" textLength="155">or2b2</text>
          <text x="970" y="574" font-size="60">Y_imp_Y1</text>
          <g font-size="30"><text x="587.500" y="393.700">B</text><text x="588" y="473.700">A</text><text x="963" y="393.700">I1</text><text x="963" y="473.700">I0</text><text x="1226.500" y="433.700">O</text><text x="1606" y="433.700">Y</text></g>
          <path d="M648 239H688.500L648 280ZM1526.500 239H1567V280ZM648 638V679H688.500ZM1567 638V679H1526.500Z"/>
        </g>
        <g fill="none" stroke="#00f" shape-rendering="crispEdges">
          <rect x="648.500" y="239.500" width="920" height="441"/>
          <path d="M568 399.500H728M949 399.500H988M568 479.500H728M949 479.500H988M1187 439.500H1267M1488 439.500H1647"/>
          <circle cx="1004" cy="400" r="15.500"/><circle cx="1004" cy="480" r="15.500"/>
          <path d="M1008 379.500H1104C1145 382 1175 403 1191.500 439.500 1175 476 1145 497 1104 500.500H1088V499.500H1008"/>
          <path d="M1007.500 381 1018 389.500C1032 402 1039.500 420 1039.500 439.500 1039.500 459 1032 478 1018 490L1007.500 499"/>
          <path d="M728 399.500H949M728 479.500H949M1267 439.500H1488" stroke="#808000"/>
        </g>
      </svg>
      <div class="vsb"><span class="sb">&#9650;</span><span class="t1"></span><span class="thumb"></span><span class="t2"></span><span class="sb">&#9660;</span></div>
    </div>
    <div class="tabs etabs">
      <div class="tab"><svg><use href="#txt"/></svg><span>NAND_RTL.vhd</span><svg class="x"><use href="#closex"/></svg></div>
      <div class="tab"><svg><use href="#sigma"/></svg><span>Design Summary (Synthesized)</span><svg class="x"><use href="#closex"/></svg></div>
      <div class="tab cur"><svg><use href="#sch"/></svg><span>NAND_RTL (RTL1)</span><svg class="x"><use href="#closex"/></svg></div>
    </div>
  </div>
</div>

<div class="bsplit"><i></i></div>
<div class="bdock">
  <div class="dock-title"><span>View by Category</span><div class="dbtns"><svg><use href="#d-arr"/></svg><svg><use href="#d-max"/></svg><svg><use href="#d-flt"/></svg><svg><use href="#d-cls"/></svg></div></div>
  <div class="heads"><strong class="hl">Design Objects of Top Level Block</strong><strong class="hr">Properties: (No Selection)</strong></div>
  <div class="tables">
    <div class="tbl"><div class="th"><span>Instances</span><svg class="cv"><path d="M1 1.500 5 5.500 9 1.500"/></svg><s></s></div><div class="tr"><svg class="c24"><use href="#t-plus1"/></svg><svg class="i16"><use href="#hier"/></svg><span>NAND_RTL</span></div></div>
    <div class="tbl"><div class="th"><span>Pins</span><svg class="cv"><path d="M1 1.500 5 5.500 9 1.500"/></svg><s></s></div><div class="tr"><svg class="c24"><use href="#t-plus1"/></svg><svg class="i16"><use href="#hier"/></svg><span>NAND_RTL</span></div></div>
    <div class="tbl"><div class="th"><span>Signals</span><svg class="cv"><path d="M1 1.500 5 5.500 9 1.500"/></svg><s></s></div><div class="tr"><svg class="c24"><use href="#t-plus1"/></svg><svg class="i16"><use href="#hier"/></svg><span>NAND_RTL</span></div></div>
    <i class="tsplit"></i>
    <div class="tbl props"><div class="th"><div class="nm"><span>Name</span><svg class="cv"><path d="M1 5.500 5 1.500 9 5.500"/></svg><s></s></div><span>Value</span><s class="end"></s></div></div>
  </div>
  <div class="tabs btabs">
    <div class="tab w1"><svg><use href="#cons"/></svg><span>Console</span></div>
    <div class="tab w2"><svg><use href="#err"/></svg><span>Errors</span></div>
    <div class="tab w3"><svg><use href="#warn"/></svg><span>Warnings</span></div>
    <div class="tab w4"><svg><use href="#find"/></svg><span>Find in Files Results</span></div>
    <div class="tab w5 cur"><svg><use href="#grid"/></svg><span>View by Category</span></div>
  </div>
  <div class="status">[1088,516]</div>
</div>

<div class="gnome-bot">
  <i class="gdots"></i>
  <div class="gbtn"><svg width="17" height="16" viewBox="0 0 17 16"><rect x=".500" y=".500" width="16" height="15" rx="1" fill="#d6d6d2" stroke="#555"/><rect x="2" y="2" width="13" height="11" fill="#2b3438"/><path d="M4 4.500 7 7 4 9.500M8 10.500H12" fill="none" stroke="#e8e8e8"/></svg><span>ise@localhost:~/Desktop</span></div>
  <div class="gbtn act"><svg width="16" height="16"><use href="#chev"/></svg><span>ISE Project Navigator (P...</span></div>
  <svg class="trash" width="22" height="22" viewBox="0 0 22 22"><path d="M1.500 2H20.500L19.500 20H2.500Z" fill="#3a72b9" stroke="#1f3f6e"/><path d="M2.500 2.500H19.500V6H2.500Z" fill="#1c3e73" stroke="#7aa3d6" stroke-width=".8"/><path d="M5 8V18M17 8V18" stroke="#5a90d2" stroke-width="1.500"/></svg>
  <div class="pager"><svg width="16" height="16"><use href="#chev"/></svg></div>
</div>

<div class="vbox-status">
  <svg width="252" height="22" viewBox="0 0 252 22">
    <rect x="2.500" y="1.500" width="16" height="19" rx="1.500" fill="url(#gSky)" stroke="#4a9ad8"/><circle cx="11" cy="8.500" r="4.500" fill="#fff" stroke="#1d5fae" stroke-width="1.500"/><circle cx="11" cy="8.500" r="1.300" fill="#1d5fae"/><path d="M4.500 17 11 12 13 14Z" fill="#1d5fae"/>
    <circle cx="35.500" cy="11" r="9.500" fill="#d2d2d2" stroke="#bdbdbd"/><circle cx="35.500" cy="11" r="2.200" fill="#eee" stroke="#aaa"/>
    <path d="M49.500 3 56 9V13L49.500 19Z" fill="#6cc4f2" stroke="#2b87cc"/><rect x="58" y="1.500" width="8" height="14" rx="3" fill="#58b6ee" stroke="#1b6bb8"/><path d="M56 9V13Q62 20 68 13V9M62 17V20M57 20.500H67M59 5.500H65M59 8.500H65M59 11.500H65" fill="none" stroke="#1b6bb8" stroke-width="1.200"/>
    <rect x="79" y="1.500" width="13" height="11" fill="#1560c8" stroke="#b8b8b8" stroke-width="1.500"/><rect x="73" y="7" width="13" height="11" fill="#0f57c0" stroke="#a6a6a6" stroke-width="1.500"/><path d="M75 20.500H85" stroke="#999" stroke-width="1.500"/>
    <path d="M96 20Q96 15 99 11L104 7 109 11 106 15Q102 19 96 20Z" fill="#7fd0f6" stroke="#2b87cc"/><path d="M104 6 109 1.500 114 6 109.500 11Z" fill="#f4f4f4" stroke="#999"/>
    <path d="M118.500 3H127L129 5.500V2.500L137 2V20H118.500Z" fill="url(#gSky)" stroke="#3a9ade"/><path d="M127 2H137V5.500H129Z" fill="#2a8bd6"/>
    <rect x="142" y="2" width="18" height="14" fill="#cfe8fb" stroke="#777" stroke-width="1.300"/><rect x="145.500" y="4.500" width="11" height="9" fill="#2f7ddc" stroke="#0d4fae" stroke-width="1.500"/><path d="M144 19H158" stroke="#888" stroke-width="2"/>
    <rect x="165" y="6" width="14" height="12" fill="#1560c8" stroke="#a6a6a6" stroke-width="1.500"/><rect x="169.500" y="1.500" width="10" height="9" rx="1" fill="#8d9df2" stroke="#5a66c8"/><path d="M179.500 5 183.500 2V11L179.500 8Z" fill="#8d9df2"/><path d="M167 20.500H177" stroke="#999" stroke-width="1.500"/>
    <path d="M187 2 191 4Q196 0 201 4L204 2V18L201 21H192L187 19 189 14 187 10 189 7Z" fill="#62c83c" stroke="#23821a"/><circle cx="196" cy="11" r="6" fill="#8ade5c" stroke="#2c8a1c"/><path d="M193 8 196 14 199 7" fill="none" stroke="#125c10" stroke-width="1.500"/><path d="M206 1.500H209V20.500H206Z" fill="#fff" stroke="#111"/><path d="M206.500 11H208.500V20H206.500Z" fill="#33d11c"/>
    <circle cx="219" cy="11" r="9" fill="#bfe9fc" stroke="#3a9ade" stroke-width="1.500"/><path d="M219 11 212 4A9 9 0 0 0 213 18Z" fill="#4aaae6"/><path d="M216 8 222 6 229 12 223 20 217 18 221 13Z" fill="#58cb35" stroke="#2c8a1c" stroke-width=".8"/>
    <rect x="233.500" y="1.500" width="18" height="19" rx="1.500" fill="#7fd4f8" stroke="#3a9ade"/><path d="M240.500 5H245V10H249L242.700 16 236.500 10H240.500Z" fill="#0c3f8e"/>
  </svg>
  <span>Right Ctrl</span>
</div>

<div class="taskbar">
  <svg class="tk" width="440" height="50" viewBox="0 0 440 50">
    <path d="M20 18 28.500 16.800V24.500H20ZM29.500 16.600 40 15V24.500H29.500ZM20 25.500H28.500V33.300L20 32.200ZM29.500 25.500H40V35L29.500 33.500Z" fill="#fff"/>
    <circle cx="92.500" cy="22.500" r="7" fill="none" stroke="#fff" stroke-width="1.500"/><path d="M87.500 27.500 80 35" stroke="#fff" stroke-width="1.600"/>
    <circle cx="153.500" cy="24.500" r="6.200" fill="none" stroke="#fff" stroke-width="3.500"/><circle cx="153.500" cy="24.500" r="9.500" fill="none" stroke="#fff" stroke-width="3.500" stroke-dasharray="3.700 3.760"/>
    <path d="M202 13H212L215 16H229V36H202Z" fill="#e8a31d"/><path d="M202 18H229V36H202Z" fill="#ffd664"/><path d="M207 36V27Q207 25 209 25H223Q225 25 225 27V36H220V31H212V36Z" fill="#3a94e0"/>
    <path d="M286 10 293 13V37L286 40 270 27.500 265.500 31 263 29V21L265.500 19 270 22.500Z" fill="#2197e6"/><path d="M286 18V32L276 25ZM265.500 22.500 268 25 265.500 27.500Z" fill="#1e1f22"/><path d="M286 10 293 13V37L286 40Z" fill="#38aef5"/>
    <svg x="325" y="10" width="30" height="30"><use href="#tux"/></svg>
    <text x="327" y="17" class="t64">64</text>
    <circle cx="402" cy="25" r="15" fill="#1273cd"/><path d="M387 25C388 5 416 5 417 22 417 29 409 31 405 28 409 23 404 18 398 19 391 20 387 25 387 28Z" fill="url(#gEdge)"/><path d="M396 25C392 34 402 41 414 34 408 41 397 42 391 35 388 30 389 22 396 20Z" fill="#0e4fa6"/><path d="M399 22C406 22 405 26 403 29 407 33 414 31 416 29L413 34C405 37 396 32 396 26Z" fill="#1f2022"/>
    <path d="M253 47H304V50H253ZM315 47H366V50H315ZM377 47H428V50H377Z" fill="#76b9ed"/>
  </svg>
  <div class="batt"><span>85%</span></div>
  <svg class="plug" width="24" height="50"><path d="M1 19H4V31H1ZM13 15H15V20H18.500V15H20.500V20H22V26L18.500 29V33H15.500V29L12 26V20H13Z" fill="#fff"/></svg>
  <svg class="sun" width="26" height="26"><circle cx="13" cy="13" r="12.800" fill="url(#gSun)"/></svg>
  <span class="wx">24°C&nbsp; Sunny</span>
  <svg class="tray" width="316" height="50" viewBox="1400 1030 316 50" fill="none" stroke="#fff" stroke-width="1.300">
    <path d="M1404 1059 1411.500 1051 1419 1059"/>
    <rect x="1434" y="1045" width="16" height="20" rx="8" fill="#0a84ff" stroke="none"/><path d="M1438 1051 1446 1058.500 1442 1062V1048L1446 1051.500 1438 1059"/>
    <path d="M1463 1048 1472 1045.500 1481 1048V1055Q1480 1062 1472 1065 1464 1062 1463 1055Z" fill="#fff" stroke="none"/><path d="M1472 1045V1065M1462 1055H1481" stroke="#1e1e22"/><circle cx="1477" cy="1060" r="5" fill="#16994a" stroke="none"/><path d="M1474.500 1060 1476.500 1062 1480 1058"/>
    <path d="M1499 1050.500H1509.500V1061H1496.500V1056M1510.500 1053.500H1511.500V1057.500H1510.500M1492 1049.500H1498V1052.500L1495 1055 1492 1052.500ZM1493.500 1046.500V1049.500M1496.500 1046.500V1049.500"/><path d="M1500 1052.500H1508V1059H1498.500V1055Z" fill="#fff" stroke="none"/>
    <rect x="1526.500" y="1049.500" width="9" height="11" rx="1.500"/><path d="M1536 1053.500 1539.500 1051.500V1058.500L1536 1056.500M1528 1047Q1532 1045 1537 1047M1528 1063Q1532 1065 1537 1063"/>
    <path d="M1556 1061C1550 1061 1551 1054 1556 1054 1557 1048 1566 1047 1568 1053 1573 1053 1573 1061 1568 1061Z" fill="#c9c9c9" stroke="none"/><path d="M1555 1061 1563 1055 1572 1060 1569 1061.500Z" fill="#fff" stroke="none"/>
    <path d="M1585 1060A16 16 0 0 1 1600 1048M1589 1062A12 12 0 0 1 1600 1052.500M1593 1063A8 8 0 0 1 1600 1057" stroke="#bbb"/><circle cx="1598.500" cy="1061.500" r="1.500" fill="#fff" stroke="none"/>
    <path d="M1612.500 1052H1615L1619.500 1048V1062L1615 1058H1612.500ZM1622 1052Q1624 1055 1622 1058M1625 1050Q1628.500 1055 1625 1060M1628 1048Q1633 1055 1628 1062"/>
    <path d="M1652 1055C1646 1055 1646 1063 1650 1063.500 1654 1064 1654 1057 1657 1055M1653.500 1062 1655 1057 1660 1046.500Q1662 1044.500 1663.500 1047L1658 1059 1654 1063M1660 1055.500 1666.500 1055.500 1660 1060"/>
    <rect x="1682.500" y="1047.500" width="29" height="15.500"/><path d="M1686 1051.500H1709M1686 1055H1709" stroke-dasharray="2 2"/><path d="M1686 1059H1689M1691 1059H1704M1706 1059H1709"/>
  </svg>
  <span class="eng">ENG</span>
  <div class="tclock"><span>07:58</span><span>26-02-2023</span></div>
  <svg class="notif" width="34" height="50"><path d="M1 15H21V31H11L5 36V31H1Z" fill="#fff"/><path d="M5 19.500H17M5 23.500H17M5 27.500H13" stroke="#1e1e22" stroke-width="1.300"/><circle cx="20" cy="34" r="10" fill="#2e2e31" stroke="#9a9a9a"/><text x="15.500" y="39" class="n2">2</text></svg>
  <i class="peek"></i>
</div>
</body>
</html>
```
FILE: styles.css
```css
* { box-sizing: border-box; }
body { margin: 0; width: 1920px; height: 1080px; overflow: hidden; display: flex; flex-direction: column; background: #efebe7; color: #111; font: 13px/18px "DejaVu Sans", sans-serif; }
svg, i, b, s { flex: none; display: block; }
s { text-decoration: none; }
span, strong { white-space: pre; }
.defs { position: absolute; }
.dots { fill: none; stroke: #a09c97; stroke-dasharray: 1 1; }
.dim { opacity: .5; }
.grow { flex: 1; }

/* host window title */
.host-title { height: 29px; flex: none; display: flex; align-items: center; background: #fff; padding-left: 2px; }
.ht-text { margin-left: 5px; flex: 1; font: 15px/29px "Open Sans", sans-serif; color: #999; letter-spacing: -.33px; }
.ht-btns { margin-right: 24px; }

/* desktop panel */
.gnome-top { height: 33px; flex: none; display: flex; align-items: center; background: #edecea; font-size: 13.300px; padding-left: 7px; border-bottom: 1px solid #dfe3da; }
.gm { margin-right: 13.600px; letter-spacing: .13px; }
.oracle { margin-right: 7px; }
.gtray { margin-left: auto; }
.gclock { width: 429px; text-align: right; padding-right: 5px; letter-spacing: .18px; }

/* window frame */
.win-title { height: 26px; flex: none; display: flex; align-items: center; background: linear-gradient(#6d6f69 0, #3a3a3a 2px, #2e2e2e 12px, #151515 23px, #5a83b8 24px, #1d2a3e 26px); color: #fff; padding: 0 7px; }
.wt-text { flex: 1; text-align: center; padding-right: 47px; font: bold 13.300px/24px "DejaVu Sans", sans-serif; letter-spacing: .095px; padding-top: 2px; }
.wt-icon { margin-right: 43px; }

.menubar { height: 27px; flex: none; display: flex; align-items: center; gap: 12.350px; background: linear-gradient(#efebe6, #e1ddd7); border-bottom: 1px solid #c9c4be; padding-left: 1px; padding-top: 1px; }
.menubar .mb-icon { margin-right: -7px; }
.menubar u { text-underline-offset: 2px; }
.mdi { margin-left: auto; display: flex; gap: 2px; margin-right: 1px; align-self: flex-start; padding-top: 2px; }
.mdi svg { border: 1px solid #9a958f; border-radius: 3px; padding: 1px; background: #f7f5f3; }

.toolbar { height: 30px; flex: none; display: flex; align-items: stretch; background: #efebe7; border-top: 1px solid #fff; border-bottom: 2px solid #b4aea8; }
.tg { display: flex; align-items: center; border-right: 1px solid #c3beb8; box-shadow: 1px 0 #fff; }
.tg:nth-child(1) { width: 162px; }
.tg:nth-child(2) { width: 185px; }
.tg:nth-child(3) { width: 220px; }
.tg:nth-child(4) { width: 125px; }
.tg:nth-child(5) { width: 67px; }
.tg:nth-child(6) { width: 96px; }
.tg.last { border: 0; box-shadow: none; }
.tg b { width: 29px; height: 26px; display: flex; align-items: center; justify-content: center; }
.tg b svg { width: 16px; height: 16px; }
.tg b.on { width: 27px; margin-left: 1px; }
.on { background: #cfcac4; border: 1px solid #8d8882; border-radius: 3px; }
.grip { width: 4px; height: 16px; margin: 0 .5px 0 4px; background: repeating-linear-gradient(#a9a49e 0 1px, #f7f5f3 1px 2px); }
.vs { width: 8px; height: 16px; border-left: 1px solid #d5d0ca; margin-left: 4px; margin-right: -4px; }
.tg em { width: 23px; display: flex; justify-content: flex-end; padding-right: 1px; }

/* work area */
.work { height: 655px; flex: none; display: flex; }
.dock { width: 277px; display: flex; flex-direction: column; }
.dock-title { height: 18px; flex: none; display: flex; justify-content: space-between; align-items: center; padding: 0 2px 0 4px; border-bottom: 1px solid #c9c5c0; border-left: 1px solid #c9c5c0; line-height: 16px; }
.dbtns { display: flex; gap: 3px; padding-top: 1px; }
.dbtns svg { width: 13px; height: 12px; }
.upper { height: 326px; flex: none; display: flex; }
.vbar { width: 29px; flex: none; border-right: 1px solid #b4afa9; padding-top: 2px; display: flex; flex-direction: column; align-items: center; }
.vbar b { width: 27px; height: 27px; margin-bottom: 3px; flex: none; display: flex; align-items: center; justify-content: center; }
.vbar b svg { width: 16px; height: 16px; }
.vbar > i { width: 16px; height: 2px; margin: 1.500px 0 4.500px; background: #cfcac4; border-bottom: 1px solid #fff; }
.ucol { width: 248px; display: flex; flex-direction: column; }
.viewrow { height: 25px; flex: none; display: flex; align-items: center; padding: 0 1px 0 4px; overflow: hidden; }
.vw { width: 32px; }
.radio { width: 12px; height: 12px; flex: none; border-radius: 50%; border: 1px solid #97928c; background: #fff; }
.radio.on { background: radial-gradient(#333 0 2.500px, #e9e7e4 4px); border-color: #97928c; }
.vi { margin: 0 4px 0 6px; }
.impl { width: 82px; margin-right: 4px; letter-spacing: -.05px; }
.simu { width: 48px; }
.treebox { flex: 1; border: 1px solid #aaa59f; background: #fff; display: flex; flex-direction: column; overflow: hidden; min-height: 0; }
.th { height: 27px; flex: none; background: linear-gradient(#f0ece8 70%, #e2dcd6); border-bottom: 1px solid #aba29b; display: flex; align-items: center; padding-left: 5px; }
.treebox .th { padding-top: 2px; }
.tr { height: 18px; flex: none; display: flex; align-items: center; }
.tr span { padding-left: 5px; line-height: 18px; }
.tr.sel { background: #928d7c; color: #fff; margin: 0 1px 0 0; }
.c24 { width: 24px; height: 18px; }
.c20 { width: 20px; height: 18px; }
.i16 { width: 16px; height: 16px; }
.proc .tr span { padding-left: 6px; }
.hsb { height: 16px; display: flex; margin: 0 1px; border: 1px solid #8f8a84; border-radius: 3px; background: #d6cdc5; }
.hb { width: 14px; font-size: 8px; line-height: 14px; text-align: center; color: #000; background: #f4f1ee; }
.hthumb { width: 152px; border: 1px solid #9f9a94; border-width: 0 1px; background: linear-gradient(90deg, transparent 71px, #aaa 71px 72px, transparent 72px 74px, #aaa 74px 75px, transparent 75px 77px, #aaa 77px 78px, transparent 78px), linear-gradient(#fff, #ebe7e3); }
.htrack { flex: 1; border-right: 1px solid #9f9a94; }
.hsplit { height: 6px; flex: none; display: flex; align-items: center; justify-content: center; border-top: 1px solid #c3beb8; }
.hsplit i, .bsplit i { width: 40px; height: 4px; background: repeating-linear-gradient(90deg, #b1aca6 0 1px, #f7f5f3 1px 2px); }
.lower { height: 279px; flex: none; display: flex; }
.noproc { height: 32px; flex: none; display: flex; align-items: center; gap: 9px; padding-left: 6px; }
.proc .th { height: 27px; }
.proc .th span { flex: 1; line-height: 20px; border-right: 1px solid #d0cbc5; margin-right: 1px; }

/* tabs */
.tabs { display: flex; }
.tab { height: 23px; border: 1px solid #8f8a84; border-top: 0; border-left: 0; background: linear-gradient(#cbc6c0, #eeeae6); display: flex; align-items: center; flex: none; border-radius: 0 0 3px 3px; }
.tab svg { width: 16px; height: 16px; }
.tab.cur { height: 25px; background: #f3f0ed; border-bottom: 3px solid #4f7cab; }
.dtabs { margin-top: 1px; padding-left: 1px; height: 25px; }
.start { width: 73px; padding-left: 5px; gap: 10.500px; }
.design { width: 85px; padding-left: 4px; gap: 12px; }
.files { width: 71px; padding-left: 7px; gap: 11px; }
.part { width: 15px; padding-left: 7px; overflow: hidden; border-right: 0; }
.nav { width: 15px; height: 24px; margin-right: 1px; background: #f4f1ee; border: 1px solid #9f9a94; border-radius: 3px; font-size: 9px; line-height: 22px; text-align: center; color: #000; }
.nav.off { color: #a5a09a; }
.vsplit { width: 7px; flex: none; display: flex; align-items: center; border-right: 1px solid #fff; }
.vsplit i, .tsplit { width: 4px; height: 40px; background: repeating-linear-gradient(#b1aca6 0 1px, #f7f5f3 1px 2px); }
.main { width: 1636px; flex: none; }
.mrow { height: 627px; display: flex; border-bottom: 1px solid #b4afa9; }
.vt { width: 29px; padding-top: 0; border-right: 2px solid #b4afa9; }
.schematic { background: #fff; }
.lbl { font-family: "Liberation Sans", Arial, sans-serif; }
.vsb { width: 16px; display: flex; flex-direction: column; border: 1px solid #8f8a84; border-radius: 3px; background: #d6cdc5; overflow: hidden; height: 625px; margin-top: 1px; }
.sb { height: 14px; background: #f6f4f2; font-size: 8px; line-height: 14px; text-align: center; color: #000; flex: none; }
.t1 { height: 69px; border-top: 1px solid #8f8a84; }
.thumb { height: 455px; border: 1px solid #8f8a84; border-width: 1px 0; background: linear-gradient(transparent 222px, #aaa 222px 223px, transparent 223px 225px, #aaa 225px 226px, transparent 226px 228px, #aaa 228px 229px, transparent 229px), linear-gradient(90deg, #fdfcfb, #e6e2dd); }
.t2 { flex: 1; border-bottom: 1px solid #8f8a84; }
.etabs { height: 26px; margin-top: 1px; border-top: 1px solid #8f8a84; }
.etabs .tab { width: 408px; padding: 0 10px 0 5px; justify-content: space-between; }
.etabs .tab:nth-child(2) { width: 411px; padding-left: 6px; }
.etabs .tab.cur { width: 408px; padding-right: 9px; }
.etabs .x { width: 14px; height: 14px; }

/* category dock */
.bsplit { height: 6px; flex: none; display: flex; align-items: center; justify-content: center; border-bottom: 1px solid #cbc7c2; padding-right: 4px; }
.bdock { height: 174px; flex: none; }
.heads { height: 26px; display: flex; text-align: center; line-height: 21px; }
.hl { width: 958px; flex: none; }
.hr { width: 962px; flex: none; padding-left: 4px; }
.tables { height: 77px; display: flex; align-items: flex-start; padding-left: 4px; }
.tbl { width: 312px; height: 77px; border: 1px solid #aaa59f; background: #fff; margin-right: 6px; flex: none; }
.tbl:nth-child(2) { margin-right: 7px; }
.tbl:nth-child(3) { margin-right: 4px; }
.tsplit { margin: 8px 6px 0 0; }
.tbl.props { width: 949px; margin: 0; }
.tables .tr { padding-left: 1px; }
.cv { width: 10px; height: 8px; margin-left: auto; margin-right: 8px; fill: none; stroke: #000; stroke-width: 2; }
.th s { width: 1px; height: 20px; background: #cfcac4; border: 0; margin-right: 2px; }
.nm { width: 473px; display: flex; align-items: center; }
.th .end { margin-left: auto; }
.nm s { margin-right: 5px; }
.btabs { height: 26px; margin-top: 4px; border-top: 1px solid #8f8a84; padding-left: 2px; }
.btabs .tab { gap: 10px; padding-left: 7px; }
.btabs .w1 { width: 91px; padding-left: 4px; gap: 11px; }
.w2 { width: 80px; } .w3 { width: 102px; } .w4 { width: 170px; }
.btabs .w5 { width: 156px; padding-left: 5px; gap: 11px; }
.status { text-align: right; padding-right: 5px; line-height: 24px; font-size: 12.500px; }

.gnome-bot { height: 25px; flex: none; display: flex; align-items: center; background: #ececea; border-top: 1px solid #fff; font-size: 13.300px; }
.gdots { width: 5px; height: 17px; margin: 0 3px 0 4px; background: radial-gradient(#bbb 0 .7px, transparent 1px) 0 0/2.500px 3px; }
.gbtn { width: 206px; height: 22px; display: flex; align-items: center; gap: 7px; border: 1px solid #8d8a86; border-radius: 4px; background: linear-gradient(#fff, #ececea); margin-right: 2px; padding-left: 6px; letter-spacing: .05px; }
.gbtn.act { background: #c8c6c3; gap: 8px; padding-left: 7px; width: 207px; }
.trash { margin-left: auto; }
.pager { width: 40px; height: 22px; margin: 0 2px 0 413px; background: #cfe0f5; border: 1px solid #8d8a86; display: flex; align-items: center; justify-content: center; }

.vbox-status { height: 25px; flex: none; background: #efefef; display: flex; align-items: center; justify-content: flex-end; gap: 4px; padding-right: 1px; font: 13.500px "Open Sans", sans-serif; color: #000; letter-spacing: -.6px; }

/* host taskbar */
.taskbar { height: 50px; flex: none; display: flex; align-items: center; background: linear-gradient(90deg, #1b1b24 0, #1e1e1f 20%, #1e1e1f 60%, #1b1a24 70%, #1b1b22 90%, #1f1f20); color: #fff; font-family: "Open Sans", sans-serif; }
.t64 { font: bold 7px "Liberation Mono", monospace; fill: #222; }
.batt { margin-left: 618px; width: 61px; height: 25px; border: 3px solid #fff; border-right-width: 2px; background: linear-gradient(90deg, #159a4a 50px, #000 50px); line-height: 20px; font-size: 16.500px; letter-spacing: -.2px; padding-left: 10px; }
.sun { margin-left: 105px; }
.wx { width: 98px; margin-left: 12px; font-size: 18px; letter-spacing: -.4px; }
.tray { margin-left: 16px; }
.eng { width: 30px; margin-left: 9px; font-size: 15.500px; letter-spacing: -.8px; }
.tclock { width: 80px; margin-left: 12px; display: flex; flex-direction: column; align-items: center; font-size: 15px; line-height: 23px; letter-spacing: -.4px; }
.notif { margin-left: 21px; }
.n2 { font: bold 15px "Open Sans", sans-serif; fill: #fff; }
.peek { width: 1px; height: 50px; background: #777; margin-left: auto; margin-right: 5px; }
```
